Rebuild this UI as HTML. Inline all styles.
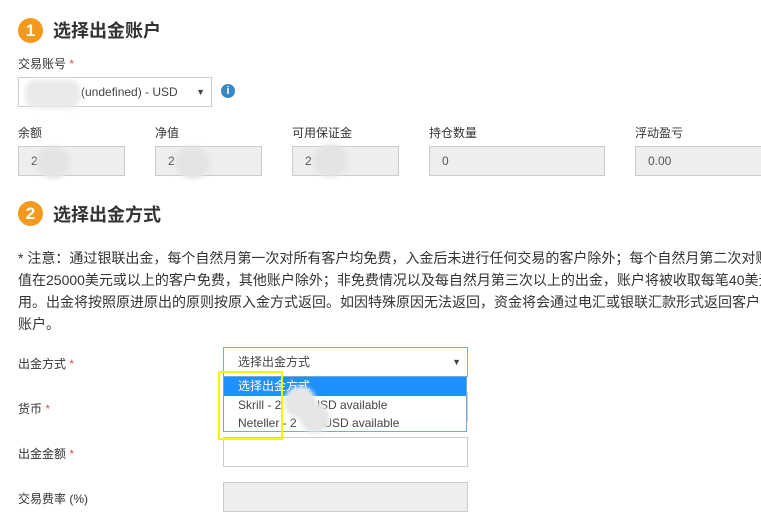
<!DOCTYPE html>
<html><head><meta charset="utf-8"><style>
body{margin:0;width:761px;height:505px;overflow:hidden;background:#fff;position:relative;font-family:"Liberation Sans","Noto Sans CJK SC",sans-serif;color:#333;}
.a{position:absolute;white-space:nowrap}
.circ{position:absolute;width:25px;height:25px;border-radius:50%;background:#f39a1e;color:#fff;font-weight:bold;font-size:17px;text-align:center;line-height:25px}
.h{font-size:18px;font-weight:bold;color:#333}
.l{font-size:12px;color:#333}
.s{color:#d9534f}
.box{position:absolute;box-sizing:border-box;border:1px solid #ccc;background:#eee;font-size:12px;color:#555;padding-left:12px;line-height:28px}
.w{background:#fff}
.blur{position:absolute;border-radius:50%;background:#e4e4e4;filter:blur(2px)}
</style></head><body>
<div class="circ" style="left:18px;top:18px">1</div>
<div class="a h" style="left:53px;top:17px">选择出金账户</div>
<div class="a l" style="left:18px;top:55px">交易账号 <span class="s">*</span></div>
<div class="box w" style="left:18px;top:77px;width:194px;height:30px;color:#444">&nbsp;&nbsp;&nbsp;&nbsp;&nbsp;&nbsp;&nbsp;&nbsp;&nbsp;&nbsp;&nbsp;&nbsp;&nbsp;&nbsp;&nbsp;(undefined) - USD<span style="position:absolute;right:6px;font-size:9px">▼</span></div>
<div class="blur" style="left:25px;top:80px;width:55px;height:28px;border-radius:10px;background:#eaeaea"></div>
<div class="a" style="left:221px;top:84px;width:14px;height:14px;border-radius:50%;background:#3a87c8;color:#fff;font-size:11px;font-weight:bold;text-align:center;line-height:14px">i</div>

<div class="a l" style="left:18px;top:124px">余额</div>
<div class="a l" style="left:155px;top:124px">净值</div>
<div class="a l" style="left:292px;top:124px">可用保证金</div>
<div class="a l" style="left:429px;top:124px">持仓数量</div>
<div class="a l" style="left:635px;top:124px">浮动盈亏</div>
<div class="box" style="left:18px;top:146px;width:107px;height:30px">2</div>
<div class="box" style="left:155px;top:146px;width:107px;height:30px">2</div>
<div class="box" style="left:292px;top:146px;width:107px;height:30px">2</div>
<div class="box" style="left:429px;top:146px;width:176px;height:30px">0</div>
<div class="box" style="left:635px;top:146px;width:140px;height:30px">0.00</div>
<div class="blur" style="left:37px;top:146px;width:33px;height:33px"></div>
<div class="blur" style="left:175px;top:146px;width:35px;height:33px"></div>
<div class="blur" style="left:313px;top:144px;width:35px;height:33px"></div>

<div class="circ" style="left:18px;top:201px">2</div>
<div class="a h" style="left:53px;top:201px">选择出金方式</div>
<div class="a" style="left:18px;top:247px;font-size:14px;line-height:22px;color:#333">* 注意：通过银联出金，每个自然月第一次对所有客户均免费，入金后未进行任何交易的客户除外；每个自然月第二次对账户净<br>值在25000美元或以上的客户免费，其他账户除外；非免费情况以及每自然月第三次以上的出金，账户将被收取每笔40美元费<br>用。出金将按照原进原出的原则按原入金方式返回。如因特殊原因无法返回，资金将会通过电汇或银联汇款形式返回客户的银行<br>账户。</div>

<div class="a l" style="left:18px;top:355px">出金方式 <span class="s">*</span></div>
<div class="a l" style="left:18px;top:400px">货币 <span class="s">*</span></div>
<div class="a l" style="left:18px;top:445px">出金金额 <span class="s">*</span></div>
<div class="a l" style="left:18px;top:490px">交易费率 (%)</div>
<div class="box w" style="left:223px;top:392px;width:245px;height:30px"></div>
<div class="box w" style="left:223px;top:437px;width:245px;height:30px"></div>
<div class="box" style="left:223px;top:482px;width:245px;height:30px"></div>
<div class="box w" style="left:223px;top:347px;width:245px;height:30px;border-color:#66afe9;color:#444;padding-left:14px">选择出金方式<span style="position:absolute;right:6px;font-size:9px">▼</span></div>
<div class="a" style="left:223px;top:376px;width:244px;height:56px;box-sizing:border-box;border:1px solid #7aa7d8;background:#fff;font-size:12px;color:#444">
<div style="background:#1e90ff;color:#fff;height:19px;line-height:19px;padding-left:14px">选择出金方式</div>
<div style="height:18px;line-height:18px;padding-left:14px">Skrill - 2&nbsp;&nbsp;&nbsp;&nbsp;&nbsp;&nbsp;&nbsp;&nbsp;&nbsp;USD available</div>
<div style="height:18px;line-height:18px;padding-left:14px">Neteller - 2&nbsp;&nbsp;&nbsp;&nbsp;&nbsp;&nbsp;&nbsp;&nbsp;USD available</div>
</div>
<div class="blur" style="left:284px;top:386px;width:32px;height:32px;background:#e6e6e6"></div>
<div class="blur" style="left:300px;top:403px;width:30px;height:30px;background:#e6e6e6"></div>
<div class="a" style="left:218px;top:371px;width:61px;height:65px;border:2px solid #f5f500"></div>
</body></html>
